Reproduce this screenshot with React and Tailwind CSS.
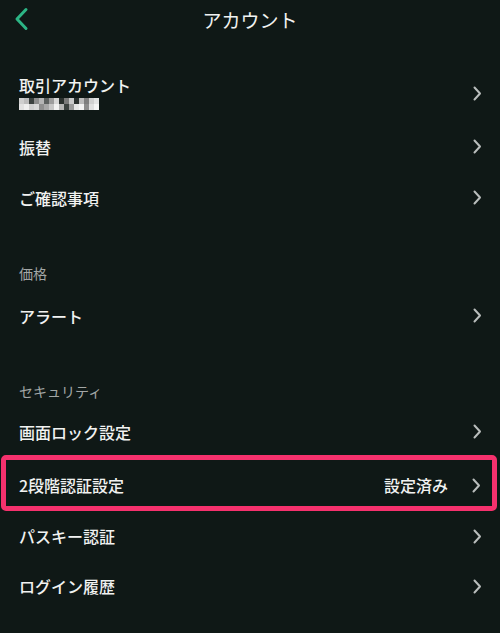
import React from 'react';

const font = { fontFamily: '"Noto Sans CJK JP", "Noto Sans", sans-serif' };

function Chevron() {
  return (
    <svg width="9" height="15" viewBox="0 0 9 15" className="shrink-0">
      <path d="M1.5 1.5 L7 7.5 L1.5 13.5" fill="none" stroke="#b9bdbc" strokeWidth="2" strokeLinecap="round" strokeLinejoin="round" />
    </svg>
  );
}

function Row({ label, value, h = 'h-[51px]' }) {
  return (
    <div className={`flex items-center justify-between pl-[19px] pr-[18px] ${h}`}>
      <span className="text-[16px] font-medium text-[#f1f2f1] leading-none">{label}</span>
      <div className="flex items-center gap-[24px]">
        {value && <span className="text-[16px] font-medium text-[#f1f2f1] leading-none">{value}</span>}
        <Chevron />
      </div>
    </div>
  );
}

function Section({ title, top }) {
  return (
    <div className={`pl-[19px] pb-[7px] ${top}`}>
      <span className="text-[14px] leading-[20px] text-[#a3a7a6] block">{title}</span>
    </div>
  );
}

// pixelated account id mask, two rows of blocks
const maskTop = ['#cfcfcf', '#bdbdbd', '#3a403e', '#8d8d8d', '#b5b5b5', '#5c605f', '#9d9d9d', '#d8d8d8', '#2a302e', '#7a7a7a', '#c9c9c9', '#2a302e', '#bcbcbc', '#7f7f7f', '#d0d0d0', '#e4e4e4'];
const maskBot = ['#e2e2e2', '#f0f0f0', '#cfcfcf', '#d9d9d9', '#8f8f8f', '#a7a7a7', '#c7c7c7', '#f2f2f2', '#b6b6b6', '#3c4240', '#9a9a9a', '#e6e6e6', '#f4f4f4', '#8e8e8e', '#e0e0e0', '#f5f5f5'];

export default function App() {
  return (
    <div className="w-[500px] h-[633px] bg-[#0f1816] overflow-hidden" style={font}>
      <div className="relative h-[38px] flex items-center justify-center">
        <svg width="16" height="24" viewBox="0 0 16 24" className="absolute left-[13px] top-[7px]">
          <path d="M13 2.5 L4 12 L13 21.5" fill="none" stroke="#2cb585" strokeWidth="3" strokeLinecap="round" strokeLinejoin="round" />
        </svg>
        <span className="text-[19px] text-[#f1f2f1] leading-none">アカウント</span>
      </div>

      <div className="h-[27px]" />

      <div className="flex items-center justify-between pl-[19px] pr-[18px] h-[56px]">
        <div className="flex flex-col gap-[5px]">
          <span className="text-[16px] font-medium text-[#f1f2f1] leading-none">取引アカウント</span>
          <div className="flex flex-col w-[80px]">
            <div className="flex">
              {maskTop.map((c, i) => (
                <div key={i} className="h-[6px] w-[5px]" style={{ background: c }} />
              ))}
            </div>
            <div className="flex">
              {maskBot.map((c, i) => (
                <div key={i} className="h-[6px] w-[5px]" style={{ background: c }} />
              ))}
            </div>
          </div>
        </div>
        <Chevron />
      </div>
      <Row label="振替" />
      <Row label="ご確認事項" />

      <Section title="価格" top="pt-[40px]" />
      <Row label="アラート" />

      <Section title="セキュリティ" top="pt-[40px]" />
      <Row label="画面ロック設定" h="h-[47px]" />

      <div className="ml-[1px] mr-[3px] border-[5px] border-[#f5316d] rounded-[5px]">
        <div className="flex items-center justify-between pl-[13px] pr-[11px] pt-[4px] h-[46px]">
          <span className="text-[16px] font-medium text-[#f1f2f1] leading-none">2段階認証設定</span>
          <div className="flex items-center gap-[24px]">
            <span className="text-[16px] font-medium text-[#f1f2f1] leading-none">設定済み</span>
            <Chevron />
          </div>
        </div>
      </div>

      <Row label="パスキー認証" h="h-[50px]" />
      <Row label="ログイン履歴" h="h-[50px]" />
    </div>
  );
}
